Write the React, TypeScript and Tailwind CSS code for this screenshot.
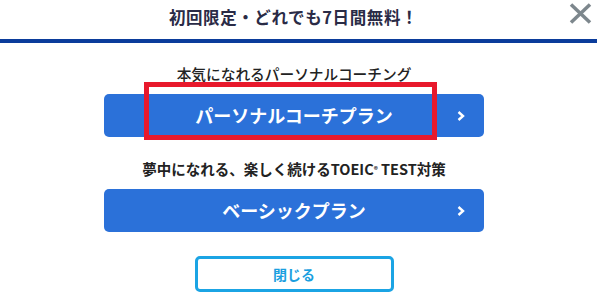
import React from "react";

export default function App() {
  const font = { fontFamily: '"Noto Sans CJK JP", "Noto Sans", sans-serif' };
  return (
    <div className="relative w-[597px] h-[307px] bg-white overflow-hidden" style={font}>
      {/* Header */}
      <div className="relative h-[39px] flex justify-center pt-[5px] pr-[10px]">
        <h1 className="text-[16.5px] leading-[24px] font-bold text-[#2a2b46] tracking-[0.6px]">
          初回限定・どれでも7日間無料！
        </h1>
        <button className="absolute left-[569px] top-[3px] w-[23px] h-[21px]" aria-label="close">
          <svg viewBox="0 0 23 21" className="w-[23px] h-[21px]">
            <line x1="2" y1="1.5" x2="21" y2="19.5" stroke="#7d878d" strokeWidth="3.5" />
            <line x1="21" y1="1.5" x2="2" y2="19.5" stroke="#7d878d" strokeWidth="3.5" />
          </svg>
        </button>
      </div>
      <div className="h-[4px] bg-[#0b3c9b]" />

      {/* Content */}
      <div className="flex flex-col items-center pt-[21px] pr-[9px]">
        <p className="text-[14.7px] leading-[20px] font-medium text-[#222]">本気になれるパーソナルコーチング</p>
        <button className="relative mt-[10px] w-[380px] h-[43px] rounded-[5px] bg-[#2b71d9] text-white text-[18px] font-bold flex items-center justify-center">
          パーソナルコーチプラン
          <svg viewBox="0 0 8 10" className="absolute right-[19px] top-[17px] w-[8px] h-[10px]">
            <polyline points="1.5,1 6,5 1.5,9" fill="none" stroke="#fff" strokeWidth="2.4" />
          </svg>
        </button>

        <p className="mt-[22px] text-[14.5px] leading-[20px] font-bold text-[#222]">
          夢中になれる、楽しく続けるTOEIC<sup className="text-[8px] relative top-[-2px]">®</sup> TEST対策
        </p>
        <button className="relative mt-[10px] w-[380px] h-[43px] rounded-[5px] bg-[#2b71d9] text-white text-[18px] font-bold flex items-center justify-center">
          ベーシックプラン
          <svg viewBox="0 0 8 10" className="absolute right-[19px] top-[17px] w-[8px] h-[10px]">
            <polyline points="1.5,1 6,5 1.5,9" fill="none" stroke="#fff" strokeWidth="2.4" />
          </svg>
        </button>

        <button className="mt-[24px] w-[199px] h-[36px] rounded-[5px] border-[3px] border-[#1ba4e4] bg-white text-[#1a9fdf] text-[14px] font-bold flex items-center justify-center">
          閉じる
        </button>
      </div>

      {/* Red highlight */}
      <div className="absolute left-[144px] top-[82px] w-[293px] h-[58px] border-[5px] border-[#e8192c]" />
    </div>
  );
}
